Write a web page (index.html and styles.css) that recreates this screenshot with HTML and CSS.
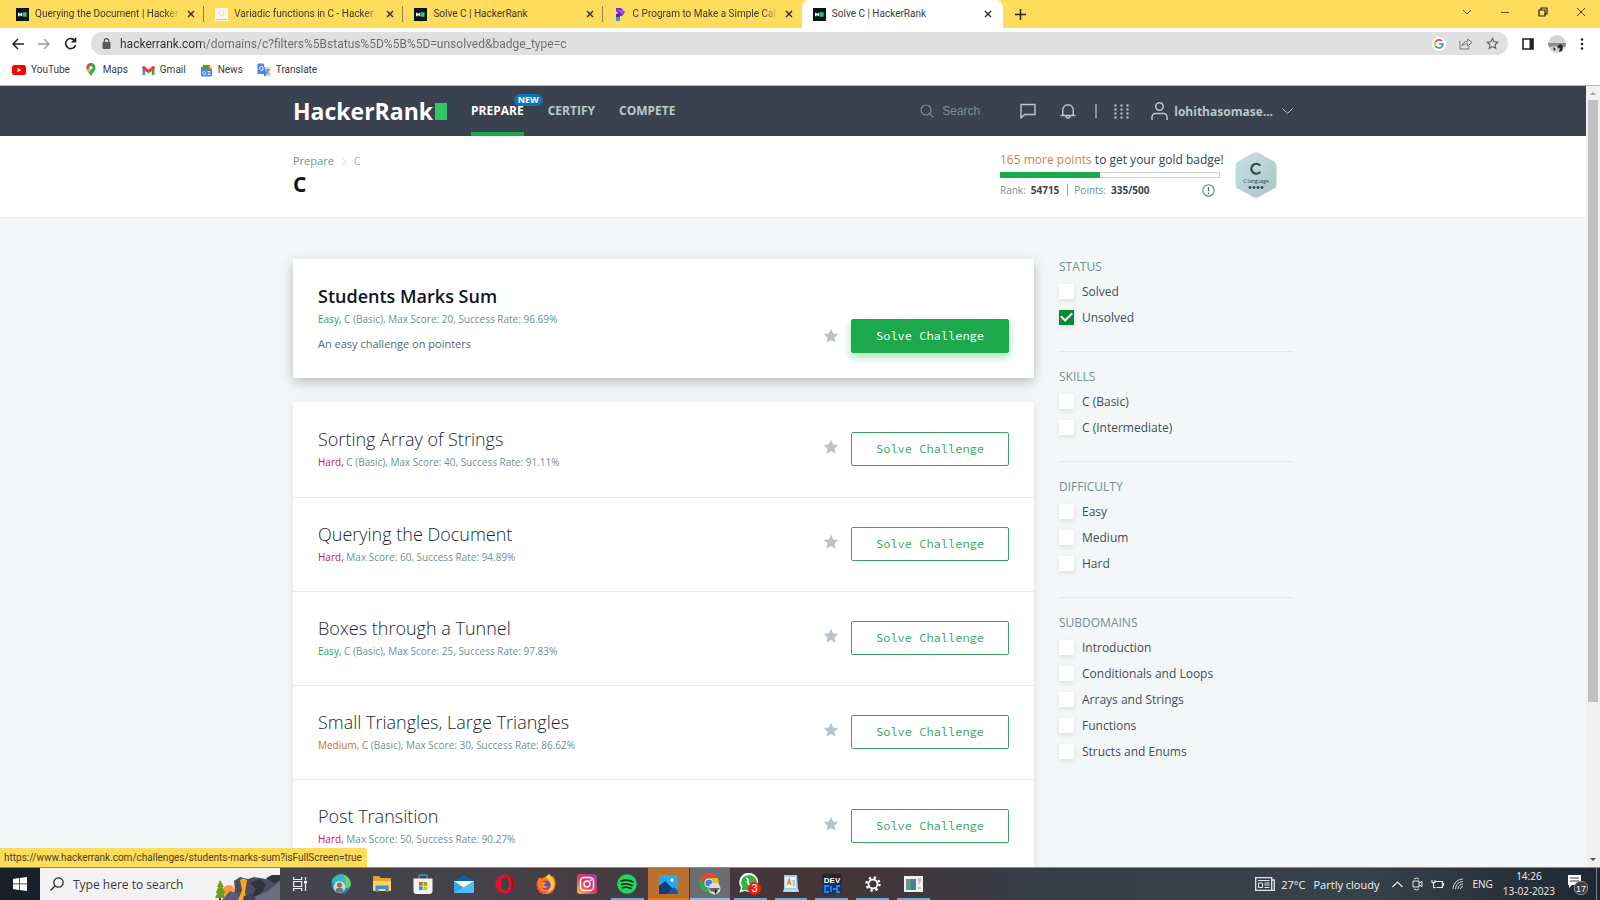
FILE: index.html
```html
<!DOCTYPE html>
<html lang="en">
<head>
<meta charset="utf-8">
<title>Solve C | HackerRank</title>
<link rel="stylesheet" href="styles.css">
</head>
<body>
<svg class="defs" width="0" height="0" aria-hidden="true">
  <symbol id="hr" viewBox="0 0 14 14"><rect width="14" height="14" fill="#0b141c"/><path d="M3 5v4M6 5v4M3 7h3" stroke="#fff" stroke-width="1.6"/><rect x="7.6" y="4.6" width="3.8" height="4.8" fill="#1fd760"/></symbol>
  <symbol id="x" viewBox="0 0 8 8"><path d="M1 1l6 6M7 1L1 7" stroke="#2e2a1c" stroke-width="1.4"/></symbol>
  <symbol id="star" viewBox="0 0 24 24"><path d="M12 1l3.300 7.200 7.700.8-5.800 5.200 1.700 7.800L12 18.100 5.100 22l1.700-7.800L1 9l7.700-.8z" fill="#b7c4cb"/></symbol>
</svg>

<header class="browser">
  <div class="tabstrip">
    <nav class="tabs" aria-label="Tabs">
      <div class="tab"><svg width="13" height="13"><use href="#hr"/></svg><span class="tab-title fade">Querying the Document | Hacker</span><button class="close" aria-label="Close tab"><svg width="8" height="8"><use href="#x"/></svg></button></div>
      <div class="tab"><svg width="13" height="13" viewBox="0 0 13 13"><rect width="13" height="13" fill="#fdf7ec"/><circle cx="6.500" cy="5" r="2.500" fill="none" stroke="#e3dfd8"/><path d="M1 11.500h11" stroke="#e8b9a5"/></svg><span class="tab-title fade">Variadic functions in C - Hacker</span><button class="close" aria-label="Close tab"><svg width="8" height="8"><use href="#x"/></svg></button></div>
      <div class="tab"><svg width="13" height="13"><use href="#hr"/></svg><span class="tab-title">Solve C | HackerRank</span><button class="close" aria-label="Close tab"><svg width="8" height="8"><use href="#x"/></svg></button></div>
      <div class="tab last"><svg width="13" height="13" viewBox="0 0 13 13"><path d="M2 0h5l4 4-3 4H5V6L2 3z" fill="#7b2be0"/><path d="M4 2h4l2 2-2 2z" fill="#c04df0"/><path d="M2 8h3l1 1v4H2z" fill="#22a7e8"/><path d="M2 6l4-1v4H2z" fill="#3b2bd0"/></svg><span class="tab-title fade">C Program to Make a Simple Cal</span><button class="close" aria-label="Close tab"><svg width="8" height="8"><use href="#x"/></svg></button></div>
      <div class="tab active"><svg width="13" height="13"><use href="#hr"/></svg><span class="tab-title">Solve C | HackerRank</span><button class="close" aria-label="Close tab"><svg width="8" height="8"><use href="#x"/></svg></button></div>
    </nav>
    <button class="newtab" aria-label="New tab"><svg width="11" height="11" viewBox="0 0 11 11"><path d="M5.500 0v11M0 5.500h11" stroke="#222" stroke-width="1.500"/></svg></button>
    <div class="winctl">
      <button aria-label="Search tabs"><svg width="10" height="10" viewBox="0 0 10 10"><path d="M1 3l4 4 4-4" fill="none" stroke="#5d4f1c"/></svg></button>
      <button aria-label="Minimize"><svg width="10" height="10" viewBox="0 0 10 10"><path d="M1 5.500h8" stroke="#5d4f1c"/></svg></button>
      <button aria-label="Restore"><svg width="10" height="10" viewBox="0 0 10 10"><path d="M1 3h6v6H1zM3 3V1h6v6H7" fill="none" stroke="#222" stroke-width="1.200"/></svg></button>
      <button aria-label="Close"><svg width="10" height="10" viewBox="0 0 10 10"><path d="M1 1l8 8M9 1L1 9" stroke="#4a3f18"/></svg></button>
    </div>
  </div>
  <div class="toolbar">
    <button aria-label="Back"><svg width="12" height="12" viewBox="0 0 12 12"><path d="M12 6H1M6 1L1 6l5 5" fill="none" stroke="#222" stroke-width="1.500"/></svg></button>
    <button aria-label="Forward"><svg width="12" height="12" viewBox="0 0 12 12"><path d="M0 6h11M6 1l5 5-5 5" fill="none" stroke="#999" stroke-width="1.300"/></svg></button>
    <button aria-label="Reload"><svg width="13" height="13" viewBox="0 0 13 13"><path d="M11 4A5 5 0 1 0 11.500 8" fill="none" stroke="#222" stroke-width="1.600"/><path d="M12.300 0v5.500H6.800z" fill="#222"/></svg></button>
    <div class="omnibox">
      <svg width="9" height="11" viewBox="0 0 9 11"><rect x=".5" y="4" width="8" height="7" rx="1" fill="#5a5a5a"/><path d="M2.300 4V2.800a2.200 2.200 0 0 1 4.400 0V4" fill="none" stroke="#5a5a5a" stroke-width="1.200"/></svg>
      <input class="url" aria-label="Address" value="hackerrank.com/domains/c?filters%5Bstatus%5D%5B%5D=unsolved&amp;badge_type=c">
      <svg width="14" height="14" viewBox="0 0 14 14"><circle cx="7" cy="7" r="7" fill="#fff"/><g fill="none" stroke-width="1.700"><path d="M10 4.200A4 4 0 0 0 3.500 5" stroke="#ea4335"/><path d="M3.500 5a4 4 0 0 0 0 4" stroke="#fbbc05"/><path d="M3.500 9a4 4 0 0 0 6.200.9" stroke="#34a853"/><path d="M9.700 9.900A4 4 0 0 0 11 7H7" stroke="#4285f4"/></g></svg>
      <svg width="14" height="13" viewBox="0 0 14 13"><path d="M1 4v8h9V9.500" fill="none" stroke="#777"/><path d="M3 9c.5-3 2.500-4.500 5.500-4.700V2L13 5.500 8.500 9V6.700C6 6.700 4.500 7.500 3 9z" fill="none" stroke="#777"/></svg>
      <svg width="13" height="13" viewBox="0 0 24 24"><path d="M12 2.500l2.900 6.300 6.900.8-5.100 4.700 1.400 6.800L12 17.700 5.900 21.100l1.400-6.800-5.100-4.700 6.900-.8z" fill="none" stroke="#5c5c5c" stroke-width="2"/></svg>
    </div>
    <button aria-label="Side panel"><svg width="12" height="12" viewBox="0 0 12 12"><path d="M1 1h10v10H1z" fill="#fff" stroke="#222" stroke-width="1.600"/><path d="M7.500 1H11v10H7.500z" fill="#222"/></svg></button>
    <button aria-label="Profile"><svg width="18" height="18" viewBox="0 0 18 18"><circle cx="9" cy="9" r="9" fill="#d4d4d4"/><path d="M0 8h18l-.5 4L13 11l-2 4-3-4-7 1z" fill="#8b8b8b"/><path d="M12 9l3 2-1 5-3 1 1-4-3-1zM5 12l3 2-2 2z" fill="#282828"/></svg></button>
    <button aria-label="Menu"><svg width="4" height="12" viewBox="0 0 4 12" fill="#222"><circle cx="2" cy="1.500" r="1.300"/><circle cx="2" cy="6" r="1.300"/><circle cx="2" cy="10.500" r="1.300"/></svg></button>
  </div>
  <nav class="bookmarks" aria-label="Bookmarks">
    <a href="#"><svg width="14" height="14" viewBox="0 0 14 14"><rect y="2" width="14" height="10" rx="2.500" fill="#f00"/><path d="M5.500 4.800v4.400L9.300 7z" fill="#fff"/></svg>YouTube</a>
    <a href="#"><svg width="14" height="14" viewBox="0 0 14 14"><path d="M7 14C6.500 10.500 2.500 8.500 2.500 4.500a4.500 4.500 0 0 1 9 0C11.500 8.500 7.500 10.500 7 14z" fill="#34a853"/><path d="M2.900 6.500L7.300 1 4 1.200a4.500 4.500 0 0 0-1.100 5.300z" fill="#4285f4"/><path d="M3 2.500L5.500 4.500 8 0 4.500.8z" fill="#ea4335"/><path d="M3 6.800l3-2.300 2 1.800L4.800 9.500z" fill="#fbbc04"/><circle cx="7" cy="4.500" r="1.500" fill="#fff"/></svg>Maps</a>
    <a href="#"><svg width="13" height="13" viewBox="0 0 13 13"><path d="M.5 2.500h2.700V11H.5z" fill="#4285f4"/><path d="M9.800 2.500h2.700V11H9.800z" fill="#34a853"/><path d="M.5 2.500L2 2l4.500 3.600L11 2l1.500.5v2.400l-6 4.400-6-4.400z" fill="#ea4335"/></svg>Gmail</a>
    <a href="#"><svg width="13" height="13" viewBox="0 0 13 13"><path d="M3 1h7v5H3z" fill="#ea4335"/><path d="M1 3l6-1 1 5H1z" fill="#34a853"/><path d="M8 2l4 1-1 4z" fill="#fbbc04"/><rect x="1" y="5" width="11" height="7.500" rx="1" fill="#4285f4"/><path d="M5.500 8.300A1.500 1.500 0 1 0 5.700 9H4.500M7.500 7.500h3M7.500 9h3M7.500 10.500h3" stroke="#fff" fill="none" stroke-width=".8"/></svg>News</a>
    <a href="#"><svg width="14" height="14" viewBox="0 0 14 14"><path d="M5 4h8.500v9.500H7z" fill="#d6dae0"/><path d="M.5.5h6L9.500 11h-9z" fill="#4285f4"/><path d="M6.300 4.700A2 2 0 1 0 6.400 6H4.800" stroke="#fff" fill="none"/><path d="M8.500 7H13M11 6c0 2-1 4-2.500 5M9.500 8.500c.5 1 1.500 2 3 2.500" stroke="#5a6c88" fill="none" stroke-width=".8"/><path d="M7 11h2.500L7.500 13.500z" fill="#1967d2"/></svg>Translate</a>
  </nav>
</header>

<div class="viewport">
  <div class="page">
    <header class="site">
      <div class="wrap site-row">
        <a class="logo" href="#">HackerRank<i class="block"></i></a>
        <nav class="main-nav" aria-label="Main">
          <a class="on" href="#">PREPARE<span class="new">NEW</span></a>
          <a href="#">CERTIFY</a>
          <a href="#">COMPETE</a>
        </nav>
        <label class="search"><svg width="14" height="14" viewBox="0 0 14 14"><circle cx="6" cy="6" r="5" fill="none" stroke="#7f8f9b" stroke-width="1.200"/><path d="M9.700 9.700L13.500 13.500" stroke="#7f8f9b" stroke-width="1.200"/></svg><input aria-label="Search" placeholder="Search"></label>
        <div class="tools">
          <button aria-label="Messages"><svg width="16" height="16" viewBox="0 0 16 16"><path d="M1 1.500h14v10H4.500L1 15z" fill="none" stroke="#b7c9cc" stroke-width="1.400"/></svg></button>
          <button aria-label="Notifications"><svg width="16" height="16" viewBox="0 0 16 16"><path d="M.5 12.500h15M2.800 12.500V7a5.200 5.200 0 0 1 10.400 0v5.500M6 13a2 2 0 0 0 4 0" fill="none" stroke="#b7c9cc" stroke-width="1.400"/></svg></button>
          <i class="bar"></i>
          <button aria-label="Products"><svg width="15" height="15" viewBox="0 0 15 15" fill="#c3d0d6"><path d="M.5.5h2v2h-2zM6.500.5h2v2h-2zM12.500.5h2v2h-2zM.5 4.500h2v2h-2zM6.500 4.500h2v2h-2zM12.500 4.500h2v2h-2zM.5 8.500h2v2h-2zM6.500 8.500h2v2h-2zM12.500 8.500h2v2h-2zM.5 12.500h2v2h-2zM6.500 12.500h2v2h-2zM12.500 12.500h2v2h-2z"/></svg></button>
        </div>
        <button class="user"><svg width="17" height="18" viewBox="0 0 17 18"><circle cx="8.500" cy="4.500" r="3.700" fill="none" stroke="#b7c9cc" stroke-width="1.500"/><path d="M1 18v-3a3.500 3.500 0 0 1 3.500-3.500h8A3.500 3.500 0 0 1 16 15v3" fill="none" stroke="#b7c9cc" stroke-width="1.500"/></svg><span>lohithasomase...</span><svg width="11" height="7" viewBox="0 0 11 7"><path d="M.5.5l5 5 5-5" fill="none" stroke="#b7c9cc"/></svg></button>
      </div>
    </header>

    <section class="subhead">
      <div class="wrap subhead-row">
        <div>
          <nav class="crumbs" aria-label="Breadcrumb"><a href="#">Prepare</a><svg width="6" height="9" viewBox="0 0 6 9"><path d="M1 .5l4 4-4 4" fill="none" stroke="#c6cdd2"/></svg><span>C</span></nav>
          <h1>C</h1>
        </div>
        <div class="progress">
          <p class="goal"><b>165 more points</b> to get your gold badge!</p>
          <div class="track"><i></i></div>
          <p class="rank">Rank: <strong>54715</strong><i class="sep"></i>Points: <strong>335/500</strong><svg class="info" width="13" height="13" viewBox="0 0 13 13"><circle cx="6.500" cy="6.500" r="5.700" fill="none" stroke="#738f93" stroke-width="1.200"/><path d="M6.500 3v4.300M6.500 8.600V10" stroke="#576871" stroke-width="1.300"/></svg></p>
        </div>
        <svg class="badge" width="42" height="46" viewBox="0 0 42 46"><defs><linearGradient id="hx" x1="0" y1="0" x2="1" y2="1"><stop offset="0" stop-color="#c8e0e5"/><stop offset="1" stop-color="#a9c5c6"/></linearGradient></defs><path d="M18.500.8q2.500-1.200 5 0l16 9q2 1.400 2 4v18.400q0 2.600-2 4l-16 9q-2.500 1.200-5 0l-16-9q-2-1.400-2-4V13.800q0-2.600 2-4z" fill="url(#hx)"/><path d="M25.200 13.600a5 5 0 1 0 0 6.300" fill="none" stroke="#39424e" stroke-width="2.200"/><text x="21" y="31" text-anchor="middle" class="badge-text">C language</text><g fill="#39424e"><circle cx="15" cy="35.500" r="1.400"/><circle cx="19" cy="35.500" r="1.400"/><circle cx="23" cy="35.500" r="1.400"/><circle cx="27" cy="35.500" r="1.400"/></g></svg>
      </div>
    </section>

    <main class="wrap content">
      <div class="challenges">
        <article class="card featured">
          <div class="info-col"><h2>Students Marks Sum</h2><p class="meta"><span class="easy">Easy,</span> C (Basic), Max Score: 20, Success Rate: 96.69%</p><p class="desc">An easy challenge on pointers</p></div>
          <div class="act"><svg width="16" height="16"><use href="#star"/></svg><button class="solve primary">Solve Challenge</button></div>
        </article>
        <div class="list">
          <article class="card"><div class="info-col"><h2>Sorting Array of Strings</h2><p class="meta"><span class="hard">Hard,</span> C (Basic), Max Score: 40, Success Rate: 91.11%</p></div><div class="act"><svg width="16" height="16"><use href="#star"/></svg><button class="solve">Solve Challenge</button></div></article>
          <article class="card"><div class="info-col"><h2>Querying the Document</h2><p class="meta"><span class="hard">Hard,</span> Max Score: 60, Success Rate: 94.89%</p></div><div class="act"><svg width="16" height="16"><use href="#star"/></svg><button class="solve">Solve Challenge</button></div></article>
          <article class="card"><div class="info-col"><h2>Boxes through a Tunnel</h2><p class="meta"><span class="easy">Easy,</span> C (Basic), Max Score: 25, Success Rate: 97.83%</p></div><div class="act"><svg width="16" height="16"><use href="#star"/></svg><button class="solve">Solve Challenge</button></div></article>
          <article class="card"><div class="info-col"><h2>Small Triangles, Large Triangles</h2><p class="meta"><span class="medium">Medium,</span> C (Basic), Max Score: 30, Success Rate: 86.62%</p></div><div class="act"><svg width="16" height="16"><use href="#star"/></svg><button class="solve">Solve Challenge</button></div></article>
          <article class="card"><div class="info-col"><h2>Post Transition</h2><p class="meta"><span class="hard">Hard,</span> Max Score: 50, Success Rate: 90.27%</p></div><div class="act"><svg width="16" height="16"><use href="#star"/></svg><button class="solve">Solve Challenge</button></div></article>
        </div>
      </div>
      <aside class="filters">
        <fieldset><legend>STATUS</legend>
          <label><input type="checkbox">Solved</label>
          <label><input type="checkbox" checked>Unsolved</label></fieldset>
        <fieldset><legend>SKILLS</legend>
          <label><input type="checkbox">C (Basic)</label>
          <label><input type="checkbox">C (Intermediate)</label></fieldset>
        <fieldset><legend>DIFFICULTY</legend>
          <label><input type="checkbox">Easy</label>
          <label><input type="checkbox">Medium</label>
          <label><input type="checkbox">Hard</label></fieldset>
        <fieldset><legend>SUBDOMAINS</legend>
          <label><input type="checkbox">Introduction</label>
          <label><input type="checkbox">Conditionals and Loops</label>
          <label><input type="checkbox">Arrays and Strings</label>
          <label><input type="checkbox">Functions</label>
          <label><input type="checkbox">Structs and Enums</label></fieldset>
      </aside>
    </main>
  </div>
  <div class="scrollbar" aria-hidden="true">
    <svg width="14" height="14" viewBox="0 0 14 14"><path d="M4 9h6L7 6z" fill="#a3a3a3"/></svg>
    <i class="thumb"></i>
    <svg width="14" height="14" viewBox="0 0 14 14"><path d="M4 5h6L7 8z" fill="#505050"/></svg>
  </div>
  <div class="status">https://www.hackerrank.com/challenges/students-marks-sum?isFullScreen=true</div>
</div>

<footer class="taskbar">
  <button class="start" aria-label="Start"><svg width="14" height="14" viewBox="0 0 14 14" fill="#fff"><path d="M0 2l6-.9v5.500H0zM6.700 1L14 0v6.600H6.700zM0 7.300h6v5.600L0 12zM6.700 7.300H14V14l-7.300-1z"/></svg></button>
  <label class="tsearch"><svg width="14" height="14" viewBox="0 0 14 14"><circle cx="8.500" cy="5.500" r="4.700" fill="none" stroke="#222" stroke-width="1.200"/><path d="M5 9L.5 13.500" stroke="#222" stroke-width="1.200"/></svg><input aria-label="Type here to search" placeholder="Type here to search">
    <svg class="scene" width="66" height="25" viewBox="0 0 66 25"><circle cx="15" cy="16" r="6" fill="#ff9a3c"/><path d="M20 6l6-4 8 2 6-2 12 2 8-4h6v25H18l3-10z" fill="#4d4d60"/><path d="M8 25l8-9 8 3 5 6z" fill="#595a7c"/><path d="M26 5q3-3 7 0l-2 12 2 8h-9l4-10z" fill="#ffa51f"/><path d="M36 8l6 6-4 8 8-2 6-10-6-6zM52 3l8 5 6-3V0h-8z" fill="#32323f"/><path d="M42 21l12-5 12-10v19H38z" fill="#6c6d83"/><path d="M30 21l8-2 4 6H29z" fill="#42425a"/><path d="M6 5l4 7H8.500l3 6H9.500l2 5H1l2.500-5H1.500l3-6H3z" fill="#6e9d22"/><path d="M5 23h2v2H5z" fill="#5a3a16"/></svg>
  </label>
  <div class="apps">
    <button aria-label="Task view"><svg width="15" height="14" viewBox="0 0 15 14"><path d="M.7 0v2.500h8V0M.7 14v-2.500h8V14M.7 4.500h8v5h-8zM12.500 0v3.500M12.500 7v7" fill="none" stroke="#f2f2f2" stroke-width="1.200"/><path d="M11 4h3v2.500h-3z" fill="#fff"/></svg></button>
    <button aria-label="Edge"><svg width="20" height="20" viewBox="0 0 20 20"><circle cx="10" cy="10" r="9.700" fill="#1a86d0"/><path d="M.5 8a9.700 9.700 0 0 1 19.200 2c0 4-3 5-6 4z" fill="#35b8c4"/><path d="M11 .5a9.700 9.700 0 0 1 8.700 9.500c0 3-3 4-5 3.500 1.500-4 0-8-3.700-13z" fill="#6bd35f"/><circle cx="8.500" cy="13" r="6" fill="#d6d3cf"/><circle cx="8.500" cy="11" r="2.500" fill="#77726d"/><path d="M4.500 17.200a4 3.500 0 0 1 8 0 6 6 0 0 1-8 0z" fill="#77726d"/></svg></button>
    <button aria-label="File Explorer"><svg width="18" height="16" viewBox="0 0 18 16"><path d="M0 1q0-1 1-1h5l2 2h9q1 0 1 1v12H0z" fill="#e2a52c"/><path d="M0 5h18v10H0z" fill="#ffd766"/><path d="M2.500 16V9.500h13V16h-3v-3h-7v3z" fill="#3f8fd0"/></svg></button>
    <button aria-label="Store"><svg width="20" height="20" viewBox="0 0 20 20"><path d="M6 5V2q0-1 1-1h6q1 0 1 1v3" fill="none" stroke="#2b9be0" stroke-width="1.500"/><path d="M.5 4.500h19V17q0 3-3 3h-13q-3 0-3-3z" fill="#f3f3f3"/><path d="M6 8h3.700v3.700H6z" fill="#f25022"/><path d="M10.500 8h3.700v3.700h-3.700z" fill="#7fba00"/><path d="M6 12.400h3.700v3.700H6z" fill="#00a4ef"/><path d="M10.500 12.400h3.700v3.700h-3.700z" fill="#ffb900"/></svg></button>
    <button aria-label="Mail"><svg width="20" height="18" viewBox="0 0 20 18"><path d="M0 6l10-6 10 6v11H0z" fill="#0f5fae"/><path d="M0 6h20v3l-10 5L0 9z" fill="#e8f4fb"/><path d="M0 6l10 7 10-7v12H0z" fill="#2fa7ea"/><path d="M1 6h18l-9 6.500z" fill="#f4fafe"/><path d="M0 18l20-12v12z" fill="#55bdf3"/></svg></button>
    <button aria-label="Opera"><svg width="20" height="20" viewBox="0 0 20 20"><circle cx="10" cy="10" r="9.700" fill="#e0142a"/><path d="M13 1a9.700 9.700 0 0 1 0 18c5-4 5-14 0-18z" fill="#a90d1d"/><ellipse cx="10" cy="10" rx="4" ry="6.800" fill="#434247"/></svg></button>
    <button aria-label="Firefox"><svg width="20" height="20" viewBox="0 0 20 20"><path d="M1 8Q2 4 4 3l1 2q2-2 4-2l4-3q1 2 2 3l2-1q3 4 2.500 8.500A9.500 9.500 0 0 1 .5 11z" fill="#ff7b1a"/><path d="M10 4l3-4q4 3 5 8 1 9-7 10 6-5 3-10-1-3-4-4z" fill="#ffd23c"/><path d="M1 8q1 11 10 11-5 1-8-3T1 8z" fill="#f0254f"/><circle cx="10" cy="11" r="4.500" fill="#7542d8"/><path d="M5 9q3-2 5 0-1 2-3 2 2 2 5 1-3 4-6 1z" fill="#ff9820"/></svg></button>
    <button aria-label="Instagram"><svg width="20" height="20" viewBox="0 0 20 20"><defs><linearGradient id="ig" x1="0" y1="1" x2="1" y2="0"><stop offset="0" stop-color="#fdc34a"/><stop offset=".45" stop-color="#ee3a50"/><stop offset="1" stop-color="#8a3ac8"/></linearGradient></defs><rect width="20" height="20" rx="3" fill="url(#ig)"/><g fill="none" stroke="#fff" stroke-width="1.400"><rect x="3.500" y="3.500" width="13" height="13" rx="3.500"/><circle cx="10" cy="10" r="3"/></g><circle cx="13.800" cy="6.200" r=".9" fill="#fff"/></svg></button>
    <button class="open" aria-label="Spotify"><svg width="20" height="20" viewBox="0 0 20 20"><circle cx="10" cy="10" r="9.800" fill="#1ed760"/><path d="M4 7q6.500-2 12 1M4.700 10.500q5.500-1.500 10.300 1M5.300 13.700q4.700-1.200 8.700.9" fill="none" stroke="#15281b" stroke-width="1.700" stroke-linecap="round"/></svg></button>
    <button class="open photos" aria-label="Photos"><svg width="19" height="19" viewBox="0 0 19 19"><path d="M0 0h19v19H0z" fill="#28a8ea"/><path d="M0 11l6-5 13 13H0z" fill="#173a78"/><path d="M8 19l7-7 4 4v3z" fill="#1e579f"/><circle cx="13" cy="5" r="1.700" fill="#f4fafe"/></svg></button>
    <button class="open current" aria-label="Chrome"><svg width="22" height="22" viewBox="0 0 22 22"><circle cx="10" cy="10" r="9.800" fill="#34a853"/><path d="M1.500 5.100A9.800 9.800 0 0 1 18.500 5.100H10a5 5 0 0 0-4.400 7.300z" fill="#ea4335"/><path d="M18.500 5.100A9.800 9.800 0 0 1 10 19.800l4.300-7.300A5 5 0 0 0 10 5.100z" fill="#fbbc04"/><circle cx="10" cy="10" r="4.500" fill="#fff"/><circle cx="10" cy="10" r="3.600" fill="#3b7de8"/><circle cx="15.500" cy="15.500" r="6" fill="#dadada"/><path d="M10 15h11l-2 2-2 4-2-2-4-1z" fill="#666"/><path d="M16 16l2 2-2 3z" fill="#111"/></svg></button>
    <button class="open" aria-label="WhatsApp"><svg width="22" height="22" viewBox="0 0 22 22"><path d="M.5 19.500l1.300-5A9.500 9.500 0 1 1 6 18z" fill="#f4f4f4"/><path d="M2.500 17.500l1-3.500a7.800 7.800 0 1 1 3 2.700z" fill="#2bb741"/><path d="M7 5.500q1.500-.5 2 1.500t-.5 2q1 2.500 3 3.200" fill="none" stroke="#fff" stroke-width="1.800"/><circle cx="15.500" cy="15.500" r="6.500" fill="#f01d17"/><text x="15.500" y="19.300" text-anchor="middle" class="count">3</text></svg></button>
    <button class="open" aria-label="WordPad"><svg width="16" height="18" viewBox="0 0 16 18"><path d="M1 0h13l1 14 1 3H0l1-3z" fill="#9fcdf0"/><path d="M2 2h11v11H2z" fill="#e8f2fa"/><path d="M4 10l2.200-6L8 10M4.800 8h2.800" stroke="#e88a2a" fill="none" stroke-width="1.300"/><path d="M9.500 6H12M9.500 8H12M9.500 10H12" stroke="#7a9cb8"/><path d="M0 17l1-3h14l1 3z" fill="#bfd6ea"/></svg></button>
    <button class="open" aria-label="Dev-C++"><svg width="20" height="20" viewBox="0 0 20 20"><rect width="20" height="20" rx="1" fill="#14366f"/><path d="M0 0h20v10H0z" fill="#22262f"/><text x="10" y="9" text-anchor="middle" class="dev">DEV</text><path d="M7 12H3v6h4M9 12v6M14 15h-3M18 12h-3v6h3" fill="none" stroke="#2286e8" stroke-width="1.800"/></svg></button>
    <button class="open" aria-label="Settings"><svg width="16" height="16" viewBox="0 0 16 16"><circle cx="8" cy="8" r="4.500" fill="none" stroke="#fff" stroke-width="1.800"/><circle cx="8" cy="8" r="6.500" fill="none" stroke="#fff" stroke-width="2.400" stroke-dasharray="2.300 2.805"/></svg></button>
    <button class="open" aria-label="Window"><svg width="19" height="16" viewBox="0 0 19 16"><path d="M0 0h19v16H0z" fill="#eef0f0"/><path d="M2 3h10v11H2z" fill="#4d7f86"/><path d="M2 3h5v11H2z" fill="#5f9c8c"/><path d="M14 3h3M14 5h3M14 7h2M14 12h3" stroke="#8b9a9c"/></svg></button>
  </div>
  <div class="tray">
    <svg width="20" height="14" viewBox="0 0 20 14"><path d="M.7.7h16v12.600h-16zM16.700 3h2.600v10.300h-3" fill="none" stroke="#e6e8ea" stroke-width="1.300"/><path d="M3 3.500h11.500M9.500 6h5M9.500 8h5M9.500 10.500h5M3.500 6h4v4.500h-4z" stroke="#e6e8ea" fill="none"/></svg>
    <span class="weather">27°C</span><span class="weather">Partly cloudy</span>
    <svg class="up" width="11" height="7" viewBox="0 0 11 7"><path d="M.5 6l5-5 5 5" fill="none" stroke="#e6e8ea" stroke-width="1.200"/></svg>
    <svg width="11" height="14" viewBox="0 0 11 14"><path d="M1 4h6v6H1zM7 6l3-1.500v5L7 8M2 2q2.500-2 5 0M2 12q2.500 2 5 0" fill="none" stroke="#e6e8ea"/></svg>
    <svg width="13" height="11" viewBox="0 0 13 11"><path d="M4.500 2.500h7v6h-6M12.500 4v3M1 1v2.500h3V1M2.500 3.500v4q0 1.500 2 1" fill="none" stroke="#e6e8ea" stroke-width="1.200"/></svg>
    <svg width="12" height="12" viewBox="0 0 12 12"><path d="M1 11A10 10 0 0 1 11 1M3.500 11A7.500 7.500 0 0 1 11 3.500M6 11a5 5 0 0 1 5-5M8.500 11A2.500 2.500 0 0 1 11 8.500" fill="none" stroke="#cfd4d7"/></svg>
    <span class="lang">ENG</span>
    <span class="clock">14:26<br>13-02-2023</span>
    <svg width="22" height="22" viewBox="0 0 22 22"><path d="M1 2h13v10H5l-3 3v-3H1z" fill="#fff"/><path d="M3 5h9M3 8h9" stroke="#333c45"/><circle cx="14" cy="15" r="6.800" fill="#3a3f45" stroke="#8c9094"/><text x="14" y="18.500" text-anchor="middle" class="notif">17</text></svg>
  </div>
</footer>
</body>
</html>
```

FILE: styles.css
```css
* { box-sizing: border-box; }
body {
  margin: 0;
  height: 100vh;
  display: flex;
  flex-direction: column;
  overflow: hidden;
  font-family: "Open Sans", "Noto Sans", sans-serif;
  color: #39424e;
}
button { border: 0; padding: 0; background: none; font: inherit; color: inherit; display: flex; align-items: center; justify-content: center; }
a { color: inherit; text-decoration: none; }
p, h1, h2 { margin: 0; }
svg { flex: none; display: block; }
input { font: inherit; border: 0; padding: 0; margin: 0; background: none; min-width: 0; outline: 0; }
.defs { position: absolute; }

/* Browser chrome */
.browser { background: #fff; border-bottom: 1px solid #b3b9be; color: #3a3a3a; font-family: Roboto, "Noto Sans", sans-serif; }
.tabstrip { display: flex; align-items: stretch; height: 28px; background: #ffdc5c; padding-left: 5px; }
.tabs { display: flex; flex: 0 1 998px; min-width: 0; }
.tab { flex: 1; min-width: 0; display: flex; align-items: center; gap: 6px; padding: 0 8px 0 11px; font-size: 10px; background: linear-gradient(#93803c, #93803c) right center / 1px 16px no-repeat; }
.tab.last { background: none; }
.tab.active { background: #fff; border-radius: 7px 7px 0 0; padding-right: 10px; }
.tab-title { flex: 1; white-space: nowrap; font-size: 10px; line-height: 16px; }
.fade { mask-image: linear-gradient(90deg, #000 90%, transparent); }
.close { width: 10px; height: 16px; }
.newtab { width: 35px; }
.winctl { margin-left: auto; display: flex; gap: 28px; padding-right: 14px; height: 24px; }
.toolbar { display: flex; align-items: center; height: 32px; gap: 14px; padding: 1px 16px 2px 12px; }
.omnibox { flex: 1; display: flex; align-items: center; gap: 13px; height: 23px; border-radius: 12px; background: #e0e0e0; padding: 0 9px 0 11px; }
.url { flex: 1; font-size: 12px; line-height: 16px; color: transparent; background: linear-gradient(90deg, #303030 82px, #6a6a6a 82px); -webkit-background-clip: text; background-clip: text; margin-left: -4px; }
.bookmarks { display: flex; align-items: center; gap: 14px; height: 25px; padding: 0 12px 5px; font-size: 10px; }
.bookmarks a { display: flex; align-items: center; gap: 5px; line-height: 14px; }

/* Site */
.viewport { flex: 1; min-height: 0; display: flex; position: relative; overflow: hidden; }
.page { flex: 1; min-width: 0; overflow: hidden; background: #f3f7f7; }
.wrap { max-width: 1000px; margin: 0 auto; }
.site { background: #39424e; color: #b7c9cc; }
.site-row { display: flex; align-items: center; height: 50px; }
.logo { display: flex; align-items: center; gap: 2px; color: #fff; font-weight: 700; font-size: 23px; line-height: 24px; }
.block { width: 12px; height: 17px; background: #2ec866; }
.main-nav { display: flex; gap: 24px; margin-left: 24px; font-size: 12px; font-weight: 700; line-height: 50px; }
.main-nav a { position: relative; }
.main-nav .on { color: #fff; box-shadow: inset 0 -4px #1ba94c; }
.new { position: absolute; right: -19px; top: 8px; padding: 0 4px; border-radius: 6px; background: #0f75bc; color: #fff; font-size: 9px; line-height: 12px; }
.search { display: flex; align-items: center; gap: 8px; margin-left: auto; width: 100px; font-family: "Liberation Sans", sans-serif; font-size: 12px; }
.search input { width: 60px; color: #fff; }
.search input::placeholder { color: #7f8f9b; opacity: 1; }
.tools { display: flex; align-items: center; gap: 24px; }
.bar { width: 2px; height: 14px; background: #8796a0; margin: 0 -7px 0 -5px; }
.user { gap: 6px; margin-left: 22px; font-size: 12px; font-weight: 700; }
.user svg:last-child { margin-left: 3px; }
.subhead { background: #fff; border-bottom: 1px solid #e7eaeb; }
.subhead-row { display: flex; height: 81px; padding: 15px 16px 0 0; }
.crumbs { display: flex; align-items: center; gap: 7px; font-size: 11px; line-height: 20px; color: #738f93; }
.crumbs span { color: #a3b1b5; }
h1 { font-size: 21px; line-height: 26px; font-weight: 700; color: #0e141e; }
.progress { margin-left: auto; width: 220px; }
.goal { font-size: 12px; line-height: 18px; white-space: nowrap; color: #39424e; }
.goal b { font-weight: 400; color: #cd7f55; }
.track { height: 6px; margin-top: 3px; border: 1px solid #c9d1d4; }
.track i { display: block; width: 100px; height: 6px; margin: -1px; background: #1ba94c; }
.rank { display: flex; align-items: center; gap: 5px; margin-top: 3px; font-size: 10px; line-height: 18px; color: #738f93; }
.rank strong { color: #39424e; }
.sep { width: 1px; height: 12px; background: #9aa8ac; margin: 0 1px 0 3px; }
.info { margin-left: auto; margin-right: 5px; }
.badge { margin: 1px 0 0 15px; }
.badge-text { font-size: 5px; fill: #39424e; }

.content { display: flex; gap: 25px; padding-top: 24px; }
.challenges { flex: 1; min-width: 0; padding-top: 17px; }
.card { display: flex; align-items: center; justify-content: space-between; padding: 0 25px 2px; min-height: 94px; background: #fff; }
.card h2 { font-size: 18px; line-height: 26px; font-weight: 300; color: #1d2733; }
.meta { font-size: 10px; line-height: 20px; color: #738f93; }
.desc { font-size: 11px; line-height: 16px; margin-top: 7px; color: #576871; }
.featured { min-height: 119px; margin-bottom: 24px; box-shadow: 0 4px 12px rgba(0, 0, 0, .24); }
.featured h2 { font-weight: 600; color: #0e141e; }
.featured .act { padding-top: 36px; }
.list { box-shadow: 0 2px 8px rgba(0, 0, 0, .08); }
.list .card:first-child { min-height: 95px; }
.list .card + .card { border-top: 1px solid #e8ecee; }
.list .act svg { margin-bottom: 3px; }
.easy { color: #1ba94c; }
.medium { color: #cd6f1e; }
.hard { color: #c8174a; }
.act { display: flex; align-items: center; gap: 12px; }
.solve { width: 158px; height: 34px; border: 1px solid #39a55f; border-radius: 2px; background: #fff; color: #39a55f; font: 12px "Source Code Pro", "Noto Sans Mono CJK SC", "DejaVu Sans Mono", monospace; }
.solve.primary { background: #1ba94c; color: #fff; border-color: #1ba94c; box-shadow: 0 4px 8px rgba(27, 169, 76, .4); }

.filters { width: 234px; font-size: 12px; }
.filters fieldset { border: 0; margin: 0; padding: 14px 0 21px; min-width: 0; }
.filters fieldset + fieldset { border-top: 1px solid #e3e8ea; }
.filters legend { float: left; width: 100%; padding: 0; line-height: 22px; color: #738f93; }
.filters label { clear: both; display: flex; align-items: center; gap: 8px; height: 26px; color: #454d58; }
.filters input { appearance: none; width: 15px; height: 15px; background: #fff; box-shadow: 0 2px 5px rgba(0, 0, 0, .1); display: grid; place-items: center; }
.filters input:checked { background: #0b8a35; }
.filters input:checked::after { content: ""; width: 9px; height: 5px; border: solid #fff; border-width: 0 0 2px 2px; transform: rotate(-45deg); margin-bottom: 3px; }

.scrollbar { width: 14px; display: flex; flex-direction: column; background: #f1f1f1; }
.thumb { width: 10px; margin: 0 2px auto; height: 602px; background: #c1c1c1; }
.status { position: absolute; left: 0; bottom: 0; height: 19px; padding: 0 5px 0 4px; border-radius: 0 3px 0 0; background: #ffdc5c; color: #4a4018; font: 10px/19px Roboto, "Noto Sans", sans-serif; white-space: nowrap; }

/* Taskbar */
.taskbar { display: flex; height: 33px; border-top: 1px solid #888c90; background: linear-gradient(90deg, #42454d 0%, #45434a 28%, #463a3e 42%, #443436 52%, #373d46 65%, #37424b 85%, #1e2832 100%); color: #f0f2f3; }
.start { width: 40px; background: #19202a; }
.tsearch { display: flex; align-items: center; gap: 9px; width: 240px; padding-left: 10px; background: #f2f2f2; color: #333; font-size: 12px; }
.tsearch input { flex: 1; }
.tsearch input::placeholder { color: #383838; opacity: 1; }
.scene { align-self: flex-end; height: 25px; }
.apps { display: grid; grid-template-columns: repeat(16, minmax(0, 1fr)); flex: 0 1 654px; }
.apps .open { border-bottom: 2px solid #6ba9dc; margin: 0 4px; padding-top: 2px; }
.apps .photos { background: #b8702f; border-color: #f07a18; margin: 0; }
.apps .current { background: #6d6c70; border-color: #85bdec; margin: 0 0 0 1px; }
.count { font: 11px "Liberation Sans", sans-serif; fill: #fff; }
.dev { font: bold 8px "Liberation Sans", sans-serif; fill: #fff; }
.notif { font: 9px "Liberation Sans", sans-serif; fill: #fff; }
.tray { margin-left: auto; display: flex; align-items: center; gap: 8px; padding-right: 7px; margin-right: 3px; border-right: 1px solid #7d8489; font-size: 11px; }
.tray > svg:first-child { margin-right: -2px; }
.up { margin: 0 1px 0 5px; }
.lang { font-size: 10px; }
.clock { font-size: 10px; line-height: 15px; text-align: center; margin: 0 4px 0 2px; }
```
